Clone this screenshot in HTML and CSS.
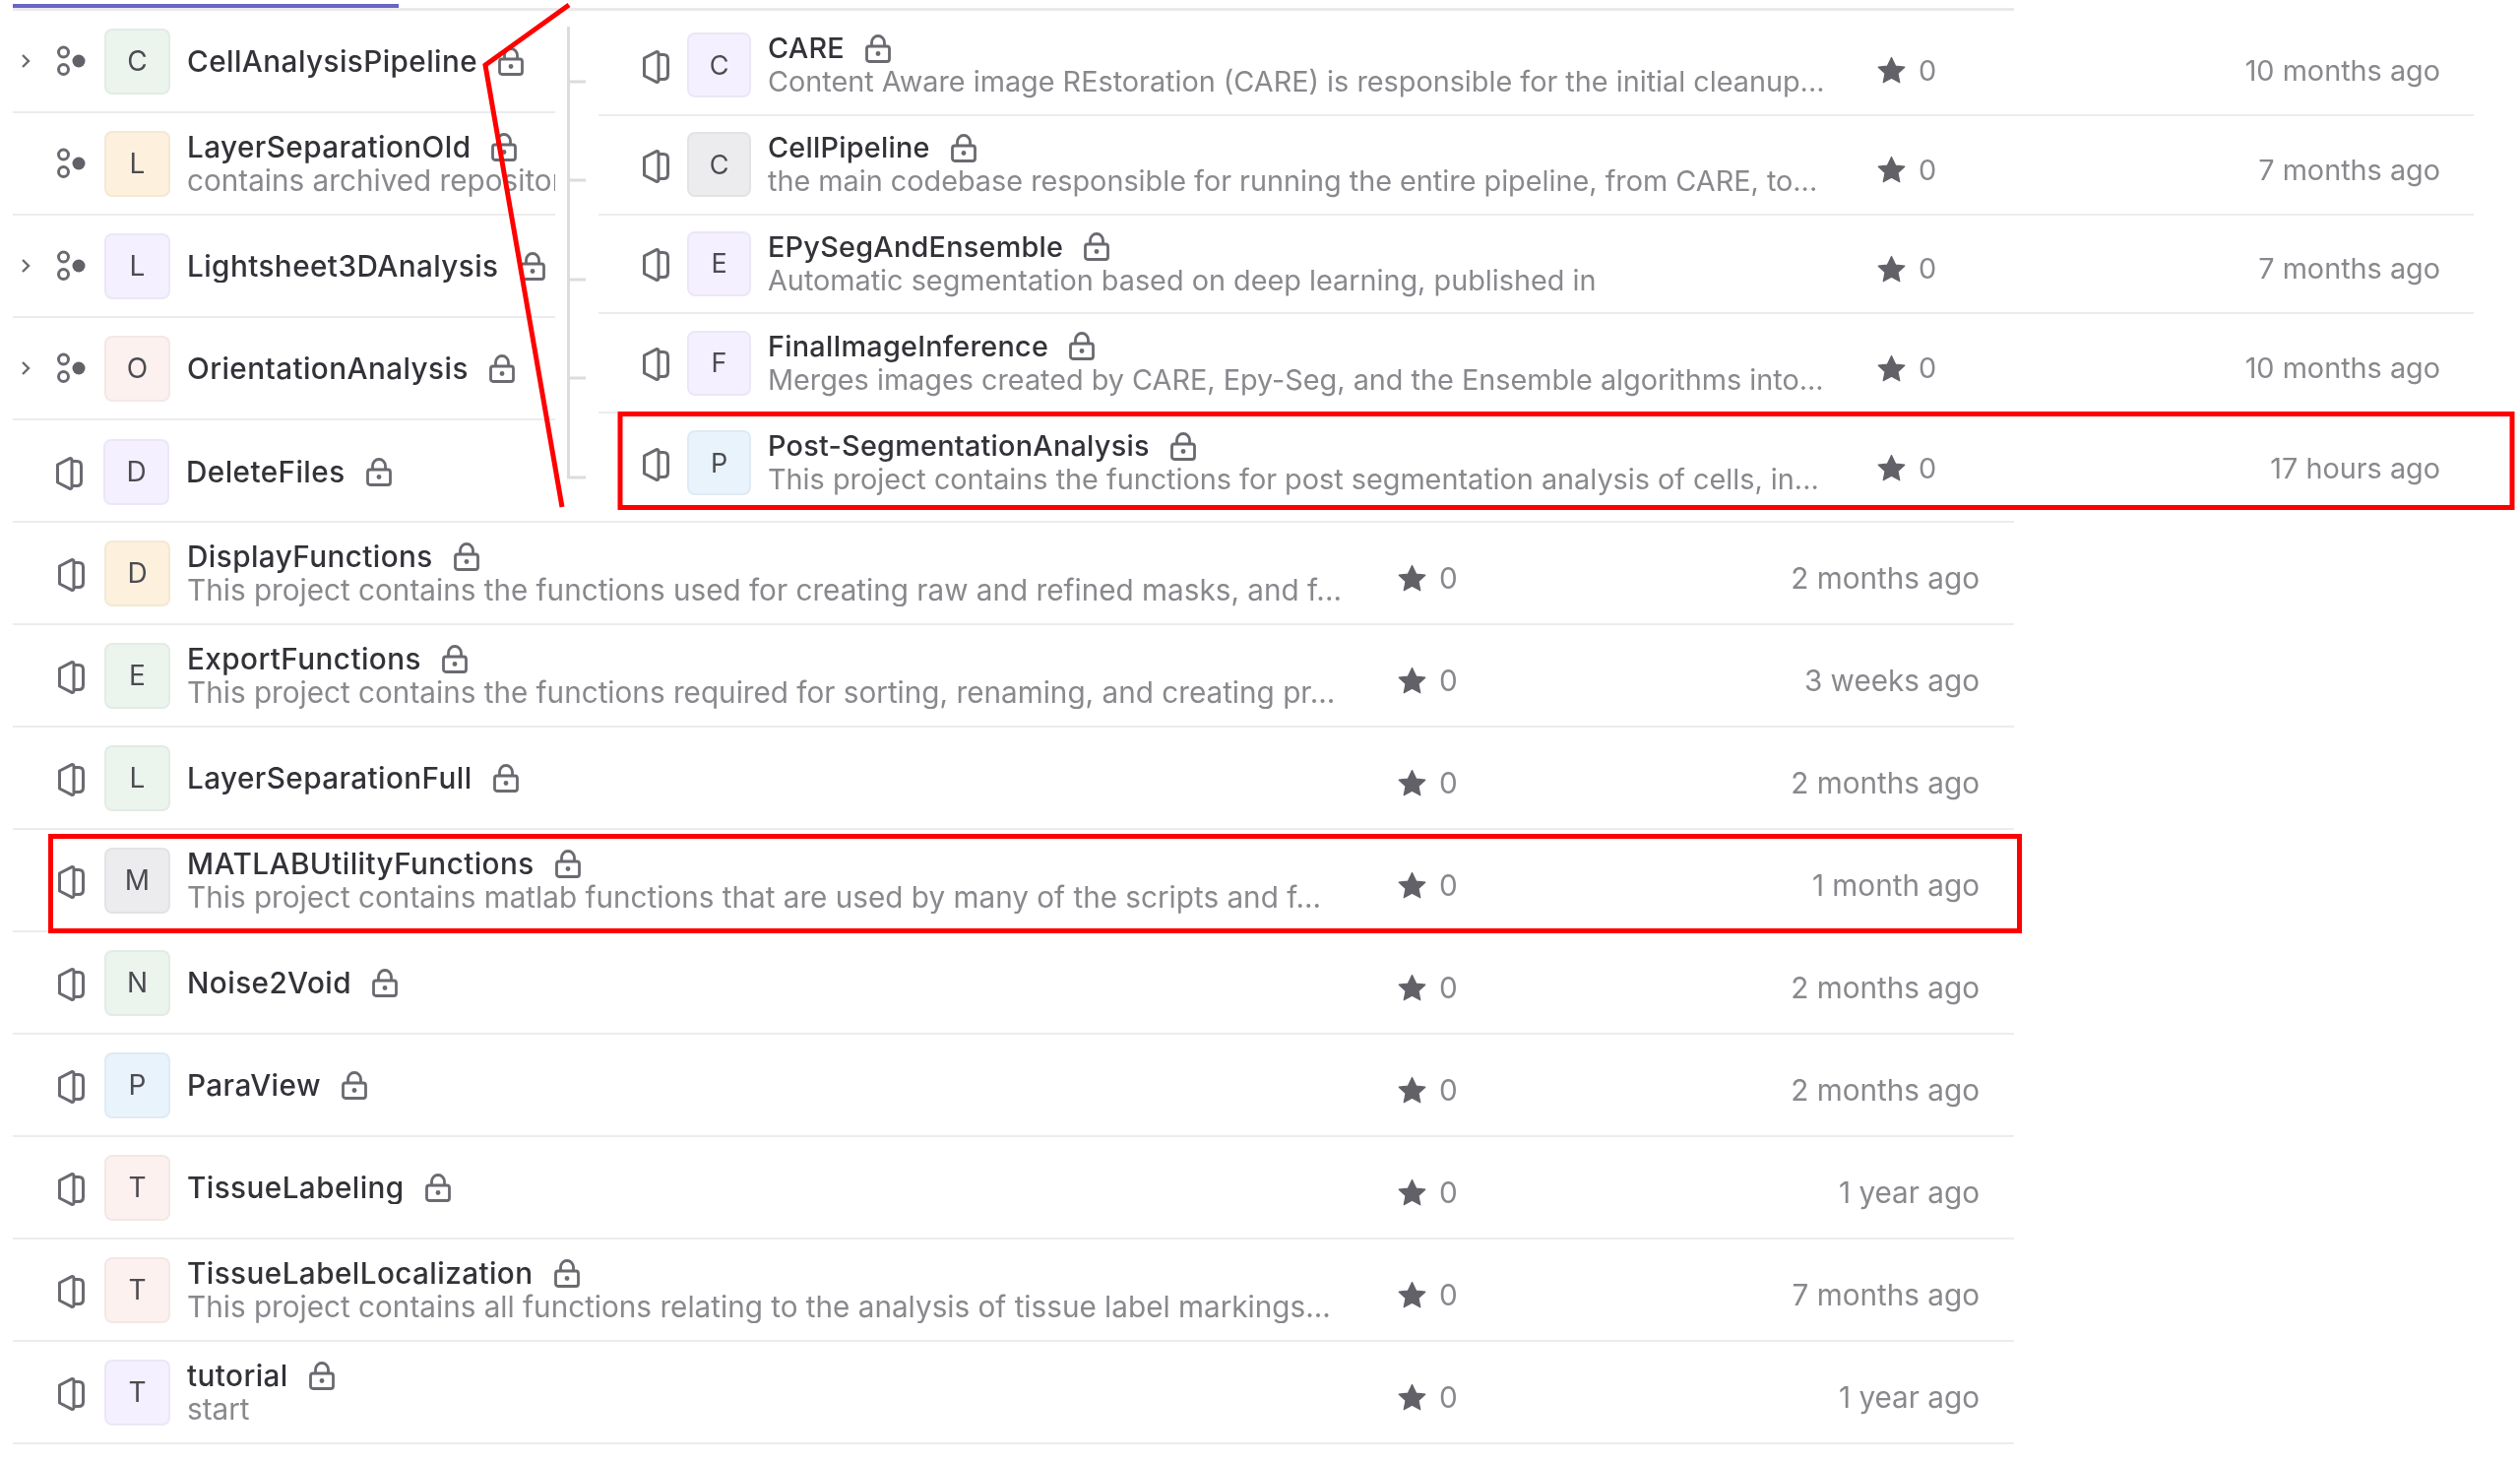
FILE: index.html
```html
<!DOCTYPE html>
<html lang="en">
<head>
<meta charset="UTF-8">
<title>Projects</title>
<link rel="stylesheet" href="styles.css">
</head>
<body>

<svg class="defs" width="0" height="0">
    <symbol id="i-project" viewBox="0 0 27 34">
        <path d="M1.5 8 L13.5 1.8 Q16 1 16 3.5 V30.5 Q16 33 13.5 32.2 L1.5 26 Z M16 4.5 H21 Q25.5 4.5 25.5 9 V25 Q25.5 29.5 21 29.5 H16" fill="none" stroke="#6b6a70" stroke-width="3" stroke-linejoin="round"/>
    </symbol>
    <symbol id="i-group" viewBox="0 0 30 32">
        <circle cx="7.5" cy="7" r="5" fill="none" stroke="#6b6a70" stroke-width="3"/>
        <circle cx="7.5" cy="24.5" r="5" fill="none" stroke="#6b6a70" stroke-width="3"/>
        <circle cx="23" cy="16" r="6.5" fill="#626168"/>
    </symbol>
    <symbol id="i-lock" viewBox="0 0 26 29">
        <path d="M6.5 12 V8 a6.5 6.5 0 0 1 13 0 V12" fill="none" stroke="#6b6a70" stroke-width="2.8"/>
        <rect x="1.5" y="12" width="23" height="15.5" rx="2.5" fill="none" stroke="#6b6a70" stroke-width="2.8"/>
        <circle cx="13" cy="19.5" r="2.4" fill="#6b6a70"/>
    </symbol>
    <symbol id="i-star" viewBox="0 0 29 28">
        <path d="M14.5 1.5 L18.6 10 L27.8 11.2 L21 17.6 L22.8 26.8 L14.5 22.3 L6.2 26.8 L8 17.6 L1.2 11.2 L10.4 10 Z" fill="#626168" stroke="#626168" stroke-width="1.2" stroke-linejoin="round"/>
    </symbol>
    <symbol id="i-chevron" viewBox="0 0 10 16">
        <path d="M2 2 L8 8 L2 14" fill="none" stroke="#6b6a70" stroke-width="2.4"/>
    </symbol>
</svg>

<div class="tabs"><div class="tab-active"></div></div>

<div class="top">
    <!-- left list, groups -->
    <div class="groups">
        <div class="row">
            <svg class="chevron"><use href="#i-chevron"/></svg>
            <svg class="icon-group"><use href="#i-group"/></svg>
            <div class="avatar green">C</div>
            <div class="info"><div class="title"><span>CellAnalysisPipeline</span><svg class="lock"><use href="#i-lock"/></svg></div></div>
        </div>
        <div class="row no-chevron">
            <svg class="icon-group"><use href="#i-group"/></svg>
            <div class="avatar orange">L</div>
            <div class="info">
                <div class="title"><span>LayerSeparationOld</span><svg class="lock"><use href="#i-lock"/></svg></div>
                <div class="desc">contains archived repositories and old code</div>
            </div>
        </div>
        <div class="row">
            <svg class="chevron"><use href="#i-chevron"/></svg>
            <svg class="icon-group"><use href="#i-group"/></svg>
            <div class="avatar purple">L</div>
            <div class="info"><div class="title"><span>Lightsheet3DAnalysis</span><svg class="lock"><use href="#i-lock"/></svg></div></div>
        </div>
        <div class="row">
            <svg class="chevron"><use href="#i-chevron"/></svg>
            <svg class="icon-group"><use href="#i-group"/></svg>
            <div class="avatar red">O</div>
            <div class="info"><div class="title"><span>OrientationAnalysis</span><svg class="lock"><use href="#i-lock"/></svg></div></div>
        </div>
        <div class="row no-chevron">
            <svg class="icon-project"><use href="#i-project"/></svg>
            <div class="avatar purple">D</div>
            <div class="info"><div class="title"><span>DeleteFiles</span><svg class="lock"><use href="#i-lock"/></svg></div></div>
        </div>
    </div>

    <svg class="tree" width="19" height="484">
        <path d="M1.5 16 V474 H19 M1.5 72 H19 M1.5 172 H19 M1.5 273 H19 M1.5 373 H19" fill="none" stroke="#dcdcde" stroke-width="3"/>
    </svg>

    <!-- right list, projects inside the subgroup -->
    <div class="subprojects">
        <div class="row">
            <svg class="icon-project"><use href="#i-project"/></svg>
            <div class="avatar purple">C</div>
            <div class="info">
                <div class="title"><span>CARE</span><svg class="lock"><use href="#i-lock"/></svg></div>
                <div class="desc">Content Aware image REstoration (CARE) is responsible for the initial cleanup...</div>
            </div>
            <div class="stars"><svg class="star"><use href="#i-star"/></svg>0</div>
            <div class="time">10 months ago</div>
        </div>
        <div class="row">
            <svg class="icon-project"><use href="#i-project"/></svg>
            <div class="avatar gray">C</div>
            <div class="info">
                <div class="title"><span>CellPipeline</span><svg class="lock"><use href="#i-lock"/></svg></div>
                <div class="desc">the main codebase responsible for running the entire pipeline, from CARE, to...</div>
            </div>
            <div class="stars"><svg class="star"><use href="#i-star"/></svg>0</div>
            <div class="time">7 months ago</div>
        </div>
        <div class="row">
            <svg class="icon-project"><use href="#i-project"/></svg>
            <div class="avatar purple">E</div>
            <div class="info">
                <div class="title"><span>EPySegAndEnsemble</span><svg class="lock"><use href="#i-lock"/></svg></div>
                <div class="desc">Automatic segmentation based on deep learning, published in</div>
            </div>
            <div class="stars"><svg class="star"><use href="#i-star"/></svg>0</div>
            <div class="time">7 months ago</div>
        </div>
        <div class="row">
            <svg class="icon-project"><use href="#i-project"/></svg>
            <div class="avatar purple">F</div>
            <div class="info">
                <div class="title"><span>FinalImageInference</span><svg class="lock"><use href="#i-lock"/></svg></div>
                <div class="desc">Merges images created by CARE, Epy-Seg, and the Ensemble algorithms into...</div>
            </div>
            <div class="stars"><svg class="star"><use href="#i-star"/></svg>0</div>
            <div class="time">10 months ago</div>
        </div>
        <div class="row">
            <svg class="icon-project"><use href="#i-project"/></svg>
            <div class="avatar blue">P</div>
            <div class="info">
                <div class="title"><span>Post-SegmentationAnalysis</span><svg class="lock"><use href="#i-lock"/></svg></div>
                <div class="desc">This project contains the functions for post segmentation analysis of cells, in...</div>
            </div>
            <div class="stars"><svg class="star"><use href="#i-star"/></svg>0</div>
            <div class="time">17 hours ago</div>
        </div>
    </div>
</div>

<!-- main list -->
<div class="projects">
    <div class="row">
        <svg class="icon-project"><use href="#i-project"/></svg>
        <div class="avatar orange">D</div>
        <div class="info">
            <div class="title"><span>DisplayFunctions</span><svg class="lock"><use href="#i-lock"/></svg></div>
            <div class="desc">This project contains the functions used for creating raw and refined masks, and f...</div>
        </div>
        <div class="stars"><svg class="star"><use href="#i-star"/></svg>0</div>
        <div class="time">2 months ago</div>
    </div>
    <div class="row">
        <svg class="icon-project"><use href="#i-project"/></svg>
        <div class="avatar green">E</div>
        <div class="info">
            <div class="title"><span>ExportFunctions</span><svg class="lock"><use href="#i-lock"/></svg></div>
            <div class="desc">This project contains the functions required for sorting, renaming, and creating pr...</div>
        </div>
        <div class="stars"><svg class="star"><use href="#i-star"/></svg>0</div>
        <div class="time">3 weeks ago</div>
    </div>
    <div class="row">
        <svg class="icon-project"><use href="#i-project"/></svg>
        <div class="avatar green">L</div>
        <div class="info">
            <div class="title"><span>LayerSeparationFull</span><svg class="lock"><use href="#i-lock"/></svg></div>
        </div>
        <div class="stars"><svg class="star"><use href="#i-star"/></svg>0</div>
        <div class="time">2 months ago</div>
    </div>
    <div class="row">
        <svg class="icon-project"><use href="#i-project"/></svg>
        <div class="avatar gray">M</div>
        <div class="info">
            <div class="title"><span>MATLABUtilityFunctions</span><svg class="lock"><use href="#i-lock"/></svg></div>
            <div class="desc">This project contains matlab functions that are used by many of the scripts and f...</div>
        </div>
        <div class="stars"><svg class="star"><use href="#i-star"/></svg>0</div>
        <div class="time">1 month ago</div>
    </div>
    <div class="row">
        <svg class="icon-project"><use href="#i-project"/></svg>
        <div class="avatar green">N</div>
        <div class="info">
            <div class="title"><span>Noise2Void</span><svg class="lock"><use href="#i-lock"/></svg></div>
        </div>
        <div class="stars"><svg class="star"><use href="#i-star"/></svg>0</div>
        <div class="time">2 months ago</div>
    </div>
    <div class="row">
        <svg class="icon-project"><use href="#i-project"/></svg>
        <div class="avatar blue">P</div>
        <div class="info">
            <div class="title"><span>ParaView</span><svg class="lock"><use href="#i-lock"/></svg></div>
        </div>
        <div class="stars"><svg class="star"><use href="#i-star"/></svg>0</div>
        <div class="time">2 months ago</div>
    </div>
    <div class="row">
        <svg class="icon-project"><use href="#i-project"/></svg>
        <div class="avatar red">T</div>
        <div class="info">
            <div class="title"><span>TissueLabeling</span><svg class="lock"><use href="#i-lock"/></svg></div>
        </div>
        <div class="stars"><svg class="star"><use href="#i-star"/></svg>0</div>
        <div class="time">1 year ago</div>
    </div>
    <div class="row">
        <svg class="icon-project"><use href="#i-project"/></svg>
        <div class="avatar red">T</div>
        <div class="info">
            <div class="title"><span>TissueLabelLocalization</span><svg class="lock"><use href="#i-lock"/></svg></div>
            <div class="desc">This project contains all functions relating to the analysis of tissue label markings...</div>
        </div>
        <div class="stars"><svg class="star"><use href="#i-star"/></svg>0</div>
        <div class="time">7 months ago</div>
    </div>
    <div class="row">
        <svg class="icon-project"><use href="#i-project"/></svg>
        <div class="avatar purple">T</div>
        <div class="info">
            <div class="title"><span>tutorial</span><svg class="lock"><use href="#i-lock"/></svg></div>
            <div class="desc">start</div>
        </div>
        <div class="stars"><svg class="star"><use href="#i-star"/></svg>0</div>
        <div class="time">1 year ago</div>
    </div>
</div>

<!-- red annotations drawn over the screenshot -->
<svg class="marks" width="2560" height="1484">
    <path d="M578 5 L493 66 L571 515" fill="none" stroke="#ff0000" stroke-width="5"/>
    <rect x="630" y="420.5" width="1922" height="95" fill="none" stroke="#ff0000" stroke-width="5"/>
    <rect x="51.5" y="849.5" width="2000" height="96" fill="none" stroke="#ff0000" stroke-width="5"/>
</svg>

</body>
</html>
```

FILE: styles.css
```css
body {
    margin: 0;
    background-color: #ffffff;
    font-family: Inter, "Noto Sans", sans-serif;
    color: #333238;
    position: relative;
    height: 1484px;
    overflow: hidden;
}

.defs {
    position: absolute;
}

.tabs {
    margin-left: 13px;
    width: 2033px;
    height: 11px;
    box-sizing: border-box;
    padding-top: 4px;
    border-bottom: 3px solid #e9e9ec;
}

.tab-active {
    width: 392px;
    height: 4px;
    background-color: #6666c4;
}

.top {
    display: flex;
    height: 518px;
}

.groups {
    width: 551px;
    margin-left: 13px;
    flex: none;
}

.tree {
    flex: none;
    margin-left: 12px;
    margin-right: 13px;
}

.subprojects {
    width: 1905px;
    padding-top: 6px;
    flex: none;
}

.projects {
    margin-left: 13px;
    width: 2033px;
    border-top: 2px solid #ececef;
}

/* the source picture is a soft, upscaled screenshot */
.tabs,
.top,
.projects {
    filter: blur(0.5px);
}

.row {
    display: flex;
    align-items: center;
    box-sizing: border-box;
    height: 104px;
    border-bottom: 2px solid #ececef;
}

.groups .row:last-child,
.subprojects .row:last-child {
    border-bottom: none;
}

.subprojects .row {
    height: 100.75px;
    padding-right: 34px;
}

.projects .row {
    padding-right: 35px;
}

.chevron {
    width: 10px;
    height: 16px;
    flex: none;
    margin-left: 8px;
    margin-right: 26px;
}

.no-chevron {
    padding-left: 44px;
}

.icon-group {
    width: 30px;
    height: 32px;
    flex: none;
    margin-right: 19px;
}

.icon-project {
    width: 27px;
    height: 34px;
    flex: none;
    margin-top: 3px;
    margin-right: 21px;
}

.projects .icon-project {
    margin-left: 46px;
    margin-right: 20px;
}

.subprojects .icon-project {
    margin-left: 45px;
    margin-right: 18px;
}

.avatar {
    width: 67px;
    height: 67px;
    flex: none;
    box-sizing: border-box;
    display: flex;
    align-items: center;
    justify-content: center;
    border-radius: 8px;
    border: 2px solid rgba(31, 30, 36, 0.04);
    font-size: 28px;
    color: #4c4b51;
}

.subprojects .avatar {
    width: 65px;
    height: 66px;
    font-size: 27px;
}

.green { background-color: #ecf4ee; }
.orange { background-color: #fdf1dd; }
.purple { background-color: #f4f0ff; }
.red { background-color: #fcf1ef; }
.blue { background-color: #e9f3fc; }
.gray { background-color: #ececef; }

.info {
    flex: 1;
    min-width: 0;
    margin-left: 17px;
    overflow: hidden;
}

.title {
    display: flex;
    align-items: center;
    font-size: 29.7px;
    font-weight: 500;
    letter-spacing: 0.42px;
    line-height: 34px;
    white-space: nowrap;
}

.subprojects .title {
    font-size: 28.8px;
    letter-spacing: 0.25px;
}

.lock {
    width: 26px;
    height: 29px;
    flex: none;
    margin-left: 21px;
}

.desc {
    font-size: 29.7px;
    line-height: 34px;
    color: #89888d;
    white-space: nowrap;
    overflow: hidden;
}

.subprojects .desc {
    font-size: 28.8px;
}

.stars {
    width: 200px;
    flex: none;
    display: flex;
    align-items: center;
    padding-top: 10px;
    font-size: 29.7px;
    color: #89888d;
}

.subprojects .stars {
    width: 196px;
    font-size: 28.8px;
}

.star {
    width: 29px;
    height: 28px;
    flex: none;
    margin-right: 13px;
}

.time {
    width: 391px;
    flex: none;
    padding-top: 10px;
    text-align: right;
    font-size: 29.7px;
    color: #89888d;
}

.subprojects .time {
    width: 376px;
    font-size: 28.8px;
}

.marks {
    position: absolute;
    left: 0;
    top: 0;
    pointer-events: none;
}
```
